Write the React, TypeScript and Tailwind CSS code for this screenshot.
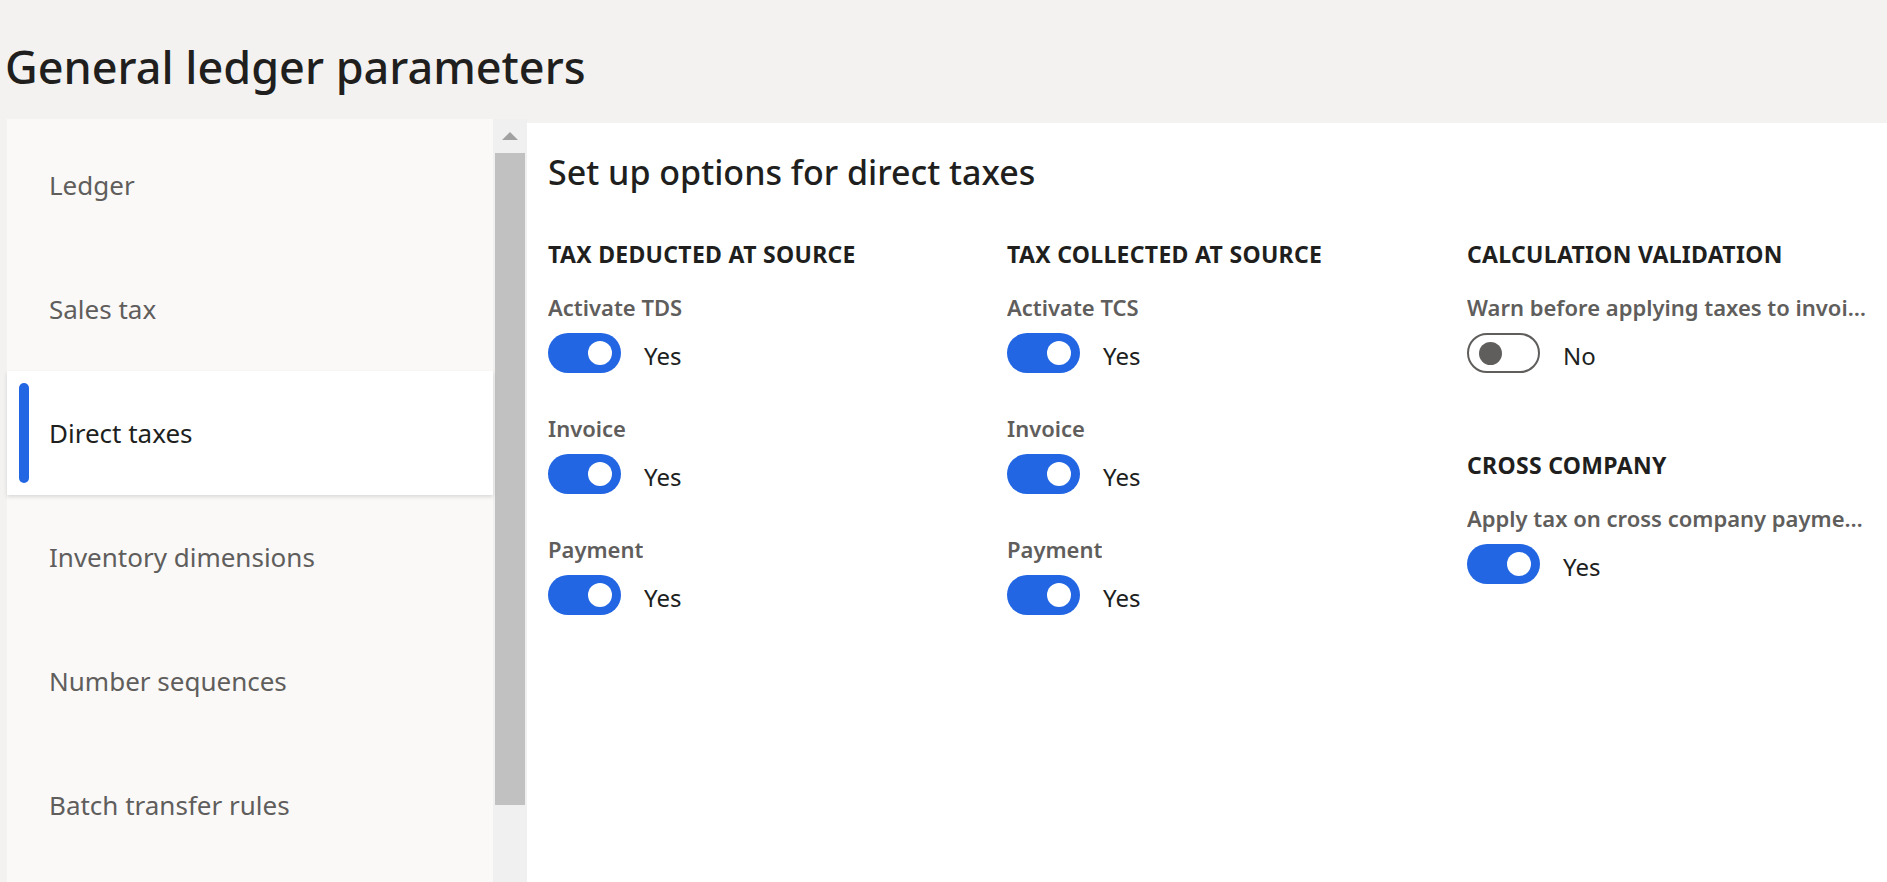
import React from "react";

type Field = { label: string; on: boolean };

const navItems = [
    "Ledger",
    "Sales tax",
    "Direct taxes",
    "Inventory dimensions",
    "Number sequences",
    "Batch transfer rules",
];

const Toggle = ({ on }: { on: boolean }) => {
    if (on) {
        return (
            <div className="w-[73px] h-[40px] rounded-full bg-[#2266e3] flex items-center justify-end pr-[9px] shrink-0">
                <div className="w-[24px] h-[24px] rounded-full bg-white" />
            </div>
        );
    }
    return (
        <div className="w-[73px] h-[40px] rounded-full border-2 border-[#605e5c] bg-white flex items-center pl-[10px] shrink-0">
            <div className="w-[23px] h-[23px] rounded-full bg-[#605e5c]" />
        </div>
    );
};

const ToggleField = ({ label, on }: Field) => (
    <div className="flex flex-col">
        <div className="h-[28px] flex items-center text-[22px] font-semibold text-[#605e5c] overflow-hidden">
            <span className="truncate">{label}</span>
        </div>
        <div className="mt-[12px] h-[40px] flex items-center">
            <Toggle on={on} />
            <span className="ml-[23px] pt-[6px] text-[24px] leading-none text-[#201f1e]">{on ? "Yes" : "No"}</span>
        </div>
    </div>
);

const SectionTitle = ({ title }: { title: string }) => (
    <div className="h-[28px] flex items-center text-[23px] font-bold tracking-[0.3px] text-[#201f1e] whitespace-nowrap">
        {title}
    </div>
);

const FieldGroup = ({ title, fields }: { title: string; fields: Field[] }) => (
    <div className="flex flex-col min-w-0">
        <SectionTitle title={title} />
        <div className="mt-[25px] flex flex-col gap-[41px]">
            {fields.map((f) => (
                <ToggleField key={f.label} label={f.label} on={f.on} />
            ))}
        </div>
    </div>
);

const Sidebar = () => (
    <nav className="w-[486px] bg-[#faf9f8] pt-[4px] flex flex-col">
        {navItems.map((item) => {
            const selected = item === "Direct taxes";
            return (
                <div
                    key={item}
                    className={
                        selected
                            ? "relative h-[124px] flex items-center pl-[42px] bg-white shadow-[0_2px_4px_rgba(0,0,0,0.13)] text-[#201f1e]"
                            : "relative h-[124px] flex items-center pl-[42px] text-[#605e5c]"
                    }
                >
                    {selected && (
                        <span className="absolute left-[12px] top-[12px] bottom-[12px] w-[10px] rounded-full bg-[#2266e3]" />
                    )}
                    <span className="text-[26px]">{item}</span>
                </div>
            );
        })}
    </nav>
);

const Scrollbar = () => (
    <div className="w-[34px] bg-[#f0f0f0] flex flex-col items-center">
        <div className="h-[34px] flex items-center justify-center">
            <div className="w-0 h-0 border-x-[8px] border-b-[8px] border-x-transparent border-b-[#a0a0a0]" />
        </div>
        <div className="w-[30px] h-[652px] bg-[#c1c1c1]" />
    </div>
);

export default function App() {
    return (
        <div className="h-[882px] w-full overflow-hidden flex flex-col bg-[#f3f2f1] font-['Noto_Sans','Open_Sans',sans-serif]">
            <header className="h-[119px] shrink-0 flex items-center pt-[13px] pl-[5px]">
                <h1 className="text-[45px] font-medium text-[#201f1e] leading-none">General ledger parameters</h1>
            </header>

            <div className="flex flex-1 min-h-0 pl-[7px]">
                <Sidebar />
                <Scrollbar />
                <main className="flex-1 bg-white mt-[4px] pl-[21px] pt-[29px]">
                    <h2 className="h-[40px] flex items-center text-[34px] font-medium text-[#201f1e]">
                        Set up options for direct taxes
                    </h2>
                    <div className="mt-[48px] grid grid-cols-[459px_460px_409px]">
                        <FieldGroup
                            title="TAX DEDUCTED AT SOURCE"
                            fields={[
                                { label: "Activate TDS", on: true },
                                { label: "Invoice", on: true },
                                { label: "Payment", on: true },
                            ]}
                        />
                        <FieldGroup
                            title="TAX COLLECTED AT SOURCE"
                            fields={[
                                { label: "Activate TCS", on: true },
                                { label: "Invoice", on: true },
                                { label: "Payment", on: true },
                            ]}
                        />
                        <div className="flex flex-col gap-[78px] min-w-0">
                            <FieldGroup
                                title="CALCULATION VALIDATION"
                                fields={[{ label: "Warn before applying taxes to invoices with differences", on: false }]}
                            />
                            <FieldGroup
                                title="CROSS COMPANY"
                                fields={[{ label: "Apply tax on cross company payments", on: true }]}
                            />
                        </div>
                    </div>
                </main>
            </div>
        </div>
    );
}
